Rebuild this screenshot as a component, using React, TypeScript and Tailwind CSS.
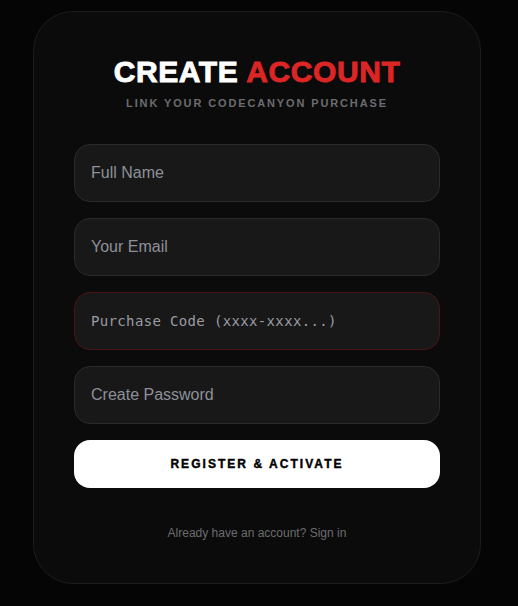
import { useState } from 'react'

const inputBase =
  'h-[58px] w-full rounded-[16px] border bg-[#181818] px-[16px] text-gray-200 outline-none placeholder:text-[#8d9099]'

export default function App() {
  const [form, setForm] = useState({ name: '', email: '', code: '', password: '' })

  const update = (key: keyof typeof form) => (e: React.ChangeEvent<HTMLInputElement>) =>
    setForm({ ...form, [key]: e.target.value })

  return (
    <div className="min-h-[606px] bg-[#050505] pt-[11px] font-['Liberation_Sans',Arial,sans-serif]">
      <div className="ml-[33px] w-[448px] rounded-[40px] border border-[#1c1c1c] bg-[#0b0b0b] px-[40px] pt-[42px] pb-[42px]">
        {/* Header */}
        <div className="flex flex-col items-center">
          <h1 className="text-[30px] leading-[36px] font-black tracking-[0.02em] text-white [-webkit-text-stroke-width:0.9px]">
            CREATE <span className="text-[#dc2626]">ACCOUNT</span>
          </h1>
          <p className="mt-[5px] text-[11px] leading-[16px] font-bold tracking-[0.17em] text-[#6b6b70]">
            LINK YOUR CODECANYON PURCHASE
          </p>
        </div>

        {/* Form */}
        <form className="mt-[33px] flex flex-col gap-[16px]" onSubmit={(e) => e.preventDefault()}>
          <input
            className={`${inputBase} border-[#2a2a2a] text-[16px]`}
            placeholder="Full Name"
            value={form.name}
            onChange={update('name')}
          />
          <input
            className={`${inputBase} border-[#2a2a2a] text-[16px]`}
            placeholder="Your Email"
            value={form.email}
            onChange={update('email')}
          />
          <input
            className={`${inputBase} border-[#4a1515] font-['DejaVu_Sans_Mono',monospace] text-[14px] tracking-[0.025em] placeholder:text-[#9a9ca3]`}
            placeholder="Purchase Code (xxxx-xxxx...)"
            value={form.code}
            onChange={update('code')}
          />
          <input
            type="password"
            className={`${inputBase} border-[#2a2a2a] text-[16px]`}
            placeholder="Create Password"
            value={form.password}
            onChange={update('password')}
          />
          <button
            type="submit"
            className="h-[48px] w-full rounded-[16px] bg-white text-[12px] font-black tracking-[0.17em] text-black [-webkit-text-stroke-width:0.4px]"
          >
            REGISTER &amp; ACTIVATE
          </button>
        </form>

        <p className="mt-[37px] text-center text-[12px] leading-[16px] text-[#6b6b70]">
          Already have an account? Sign in
        </p>
      </div>
    </div>
  )
}
